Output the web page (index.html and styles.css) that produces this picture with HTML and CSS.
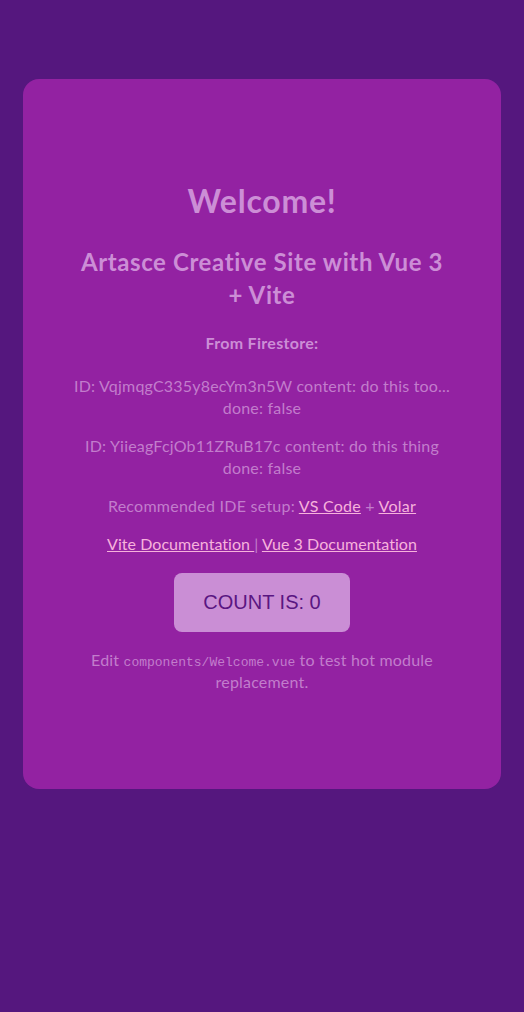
FILE: index.html
```html
<!DOCTYPE html>
<html lang="en">
<head>
<meta charset="utf-8">
<title>Artasce Creative Site</title>
<link rel="stylesheet" href="styles.css">
</head>
<body>
<main class="card">
  <h1 class="title">Welcome!</h1>
  <h2 class="subtitle">Artasce Creative Site with Vue 3 + Vite</h2>
  <p class="label">From Firestore:</p>
  <div class="list">
    <p class="item">ID: VqjmqgC335y8ecYm3n5W content: do this too... done: false</p>
    <p class="item">ID: YiieagFcjOb11ZRuB17c content: do this thing done: false</p>
  </div>
  <p class="text">Recommended IDE setup: <a href="#">VS Code</a> + <a href="#">Volar</a></p>
  <p class="text docs"><a href="#">Vite Documentation </a> | <a href="#">Vue 3 Documentation</a></p>
  <button class="count" type="button">COUNT IS: 0</button>
  <p class="text edit"><span>Edit</span> <code>components/Welcome.vue</code> <span>to test hot module replacement.</span></p>
</main>
</body>
</html>
```

FILE: styles.css
```css
html, body {
  margin: 0;
  padding: 0;
  background: #55177e;
}
body {
  font-family: Lato, "Noto Sans", sans-serif;
  color: #c27dcc;
  min-height: 1012px;
  padding-top: 79px;
  box-sizing: border-box;
}
.card {
  margin: 0 23px;
  background: #9322a2;
  border-radius: 16px;
  padding: 102px 50px 96px;
  text-align: center;
  display: flex;
  flex-direction: column;
  align-items: center;
}
.title {
  margin: 0;
  font-size: 32px;
  line-height: 40px;
  font-weight: 700;
  letter-spacing: 0.75px;
  color: #cc8ed6;
}
.subtitle {
  margin: 24px 0 0;
  font-size: 24px;
  line-height: 33px;
  font-weight: 700;
  letter-spacing: 0.6px;
  color: #cc8ed6;
}
.label {
  margin: 21px 0 0;
  font-size: 16px;
  line-height: 22px;
  font-weight: 700;
  letter-spacing: 0.3px;
  color: #cc8ed6;
}
.list {
  margin-top: 21px;
  display: flex;
  flex-direction: column;
  gap: 16px;
}
.item {
  margin: 0;
  font-size: 16px;
  line-height: 22px;
  letter-spacing: 0.2px;
}
.text {
  margin: 16px 0 0;
  font-size: 16px;
  line-height: 22px;
  letter-spacing: 0.25px;
}
.docs {
  letter-spacing: 0.05px;
}
.text a {
  color: #f7b2dc;
  text-decoration: underline;
}
.count {
  margin-top: 18px;
  width: 176px;
  height: 59px;
  border: none;
  border-radius: 8px;
  background: #ca8ed5;
  color: #5a1682;
  font-family: "Liberation Sans", Arial, sans-serif;
  font-size: 20px;
  cursor: pointer;
}
.edit {
  margin-top: 17px;
  letter-spacing: 0.2px;
}
.edit code {
  font-family: "Liberation Mono", "DejaVu Sans Mono", monospace;
  font-size: 13px;
  line-height: 13px;
  letter-spacing: 0;
}
```
